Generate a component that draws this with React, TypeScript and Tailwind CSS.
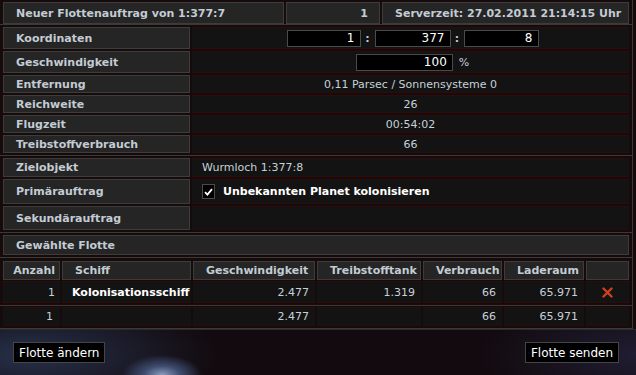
import React from 'react';

const labelCell = 'flex items-center pl-[12px] bg-[#252525] border border-[#3c3c3c] font-bold text-[#c3cbd3]';
const valueCell = 'flex items-center bg-[#131313] border-y border-[#2b0d0d] text-[#c8d0d8]';
const inputBox = 'h-[17px] bg-black border border-[#4a4a4a] text-white text-[12px] flex items-center justify-end pr-[5px]';

function Row({ label, h, children, className = '' }: { label: string; h: string; children?: React.ReactNode; className?: string }) {
    return (
        <div className={`flex gap-[2px] ${h}`}>
            <div className={`${labelCell} w-[187px]`}>{label}</div>
            <div className={`${valueCell} flex-1 ${className}`}>{children}</div>
        </div>
    );
}

const cols = 'grid grid-cols-[57px_129px_122px_104px_79px_80px_43px] gap-x-[2px]';

export default function App() {
    return (
        <div
            className="w-[636px] h-[375px] bg-[#160a0a] text-[11px] leading-none overflow-hidden flex flex-col"
            style={{ fontFamily: '"DejaVu Sans", Verdana, sans-serif' }}
        >
            <div className="w-[633px] border-r border-[#3a3a3a] flex flex-col">
                {/* Kopfzeile */}
                <div className="flex gap-[2px] px-[3px] pt-[2px] h-[24px]">
                    <div className={`${labelCell} w-[281px]`}>Neuer Flottenauftrag von 1:377:7</div>
                    <div className={`${labelCell} w-[94px] justify-end pr-[11px]`}>1</div>
                    <div className={`${labelCell} flex-1 pl-[9px]`}>Serverzeit: 27.02.2011 21:14:15 Uhr</div>
                </div>
                <div className="h-[1px] bg-[#3a3a3a]"></div>

                {/* Flugdaten */}
                <div className="flex flex-col gap-[2px] px-[3px] pt-[2px] pb-[2px]">
                    <Row label="Koordinaten" h="h-[22px]" className="justify-center pl-[4px]">
                        <div className={`${inputBox} w-[74px]`}>1</div>
                        <span className="w-[14px] text-center font-bold text-[#c3cbd3]">:</span>
                        <div className={`${inputBox} w-[76px]`}>377</div>
                        <span className="w-[13px] text-center font-bold text-[#c3cbd3]">:</span>
                        <div className={`${inputBox} w-[75px]`}>8</div>
                    </Row>
                    <Row label="Geschwindigkeit" h="h-[22px]" className="justify-center pl-[4px]">
                        <div className={`${inputBox} w-[97px]`}>100</div>
                        <span className="ml-[6px] text-[#c8d0d8]">%</span>
                    </Row>
                    <Row label="Entfernung" h="h-[18px]" className="justify-center">0,11 Parsec / Sonnensysteme 0</Row>
                    <Row label="Reichweite" h="h-[18px]" className="justify-center">26</Row>
                    <Row label="Flugzeit" h="h-[18px]" className="justify-center">00:54:02</Row>
                    <Row label="Treibstoffverbrauch" h="h-[18px]" className="justify-center">66</Row>
                </div>
                <div className="h-[1px] bg-[#3a3a3a]"></div>

                {/* Auftrag */}
                <div className="flex flex-col gap-[2px] px-[3px] pt-[2px] pb-[2px]">
                    <Row label="Zielobjekt" h="h-[19px]" className="pl-[10px]">Wurmloch 1:377:8</Row>
                    <Row label="Primärauftrag" h="h-[25px]" className="pl-[10px]">
                        <span className="w-[13px] h-[15px] bg-black border border-[#4a4a4a] flex items-center justify-center">
                            <svg width="9" height="8" viewBox="0 0 9 8">
                                <path d="M1 4.2 L3.4 6.6 L8 1.2" stroke="#fff" strokeWidth="1.8" fill="none" />
                            </svg>
                        </span>
                        <span className="ml-[8px] font-bold text-white">Unbekannten Planet kolonisieren</span>
                    </Row>
                    <Row label="Sekundärauftrag" h="h-[24px]"></Row>
                </div>
                <div className="h-[1px] bg-[#3a3a3a]"></div>

                {/* Gewählte Flotte */}
                <div className="px-[3px] pt-[2px] pb-[2px]">
                    <div className={`${labelCell} h-[20px]`}>Gewählte Flotte</div>
                </div>
                <div className="h-[1px] bg-[#3a3a3a]"></div>

                <div className="px-[3px] pt-[3px]">
                    <div className={`${cols} h-[19px]`}>
                        <div className={`${labelCell} pl-0 justify-end pr-[4px]`}>Anzahl</div>
                        <div className={`${labelCell} pl-[10px]`}>Schiff</div>
                        <div className={`${labelCell} pl-[10px]`}>Geschwindigkeit</div>
                        <div className={`${labelCell} pl-[11px]`}>Treibstofftank</div>
                        <div className={`${labelCell} pl-[10px]`}>Verbrauch</div>
                        <div className={`${labelCell} pl-[11px]`}>Laderaum</div>
                        <div className={labelCell}></div>
                    </div>
                    <div className={`${cols} h-[22px] mt-[1px]`}>
                        <div className={`${valueCell} justify-end pr-[5px]`}>1</div>
                        <div className={`${valueCell} pl-[10px] font-bold text-white`}>Kolonisationsschiff</div>
                        <div className={`${valueCell} justify-end pr-[6px]`}>2.477</div>
                        <div className={`${valueCell} justify-end pr-[6px]`}>1.319</div>
                        <div className={`${valueCell} justify-end pr-[6px]`}>66</div>
                        <div className={`${valueCell} justify-end pr-[6px]`}>65.971</div>
                        <div className={`${valueCell} justify-center`}>
                            <svg width="11" height="11" viewBox="0 0 11 11">
                                <path d="M1.5 1.5 L9.5 9.5 M9.5 1.5 L1.5 9.5" stroke="#d2401c" strokeWidth="2.4" strokeLinecap="round" />
                            </svg>
                        </div>
                    </div>
                </div>
                <div className="h-[1px] bg-[#3a3a3a] mt-[2px]"></div>
                <div className="px-[3px] pt-[1px] pb-[2px]">
                    <div className={`${cols} h-[19px]`}>
                        <div className={`${valueCell} justify-end pr-[7px]`}>1</div>
                        <div className={valueCell}></div>
                        <div className={`${valueCell} justify-end pr-[6px]`}>2.477</div>
                        <div className={valueCell}></div>
                        <div className={`${valueCell} justify-end pr-[6px]`}>66</div>
                        <div className={`${valueCell} justify-end pr-[6px]`}>65.971</div>
                        <div className={valueCell}></div>
                    </div>
                </div>
                <div className="h-[1px] bg-[#3a3a3a]"></div>
            </div>

            {/* Fußzeile */}
            <div className="flex-1 flex items-start justify-between pl-[13px] pr-[17px] pt-[12px] bg-[#120a0e] bg-[radial-gradient(ellipse_40px_20px_at_162px_100%,#8a9cc0_0%,#3e4c6e_45%,transparent_100%),radial-gradient(ellipse_190px_60px_at_30px_55%,#26304a_0%,transparent_100%),radial-gradient(ellipse_160px_60px_at_100%_55%,#201d32_0%,transparent_100%)] border-t border-[#2a2a2a]">
                <button className="h-[21px] px-[5px] bg-black border border-[#454545] text-white text-[12px] leading-none">Flotte ändern</button>
                <button className="h-[21px] px-[5px] bg-black border border-[#454545] text-white text-[12px] leading-none">Flotte senden</button>
            </div>
        </div>
    );
}
